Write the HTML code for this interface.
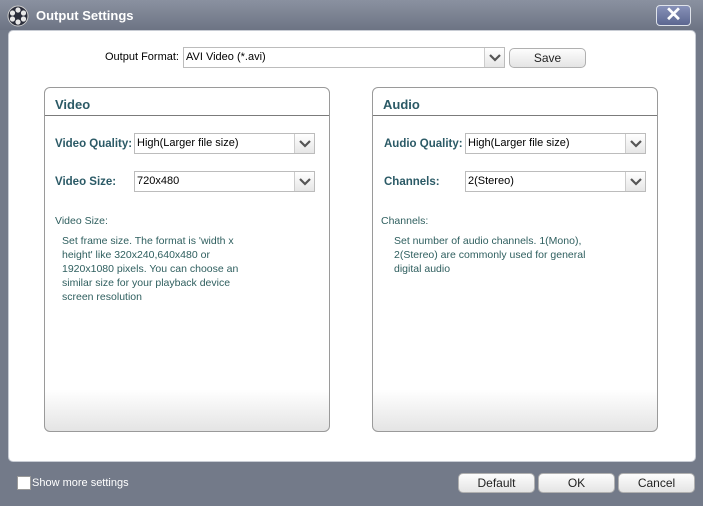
<!DOCTYPE html>
<html><head><style>
*{box-sizing:border-box;margin:0;padding:0}
body{width:703px;height:506px;background:#737a89;font-family:"Liberation Sans",sans-serif;font-size:11px;position:relative;overflow:hidden}
.abs{position:absolute}
.title{left:0;top:0;width:703px;height:30px;background:linear-gradient(#8a91a0,#6d7484)}
.ttext{left:36px;top:8px;color:#fff;font-weight:bold;font-size:13px}
.close{left:656px;top:5px;width:35px;height:21px;border:1px solid #dfe3ea;border-radius:4px;background:linear-gradient(#8791b8,#5c6790);color:#fff;font-size:20px;font-weight:bold;text-align:center;line-height:19px}
.inner{left:8px;top:30px;width:688px;height:432px;background:#fff;border:1px solid #c8ccd4;border-radius:5px}
.sel{background:#fff;border:1px solid #bcbcbc;height:21px;line-height:19px;padding-left:2px;color:#000}
.arr{position:absolute;right:0;top:0;width:20px;height:19px;border-left:1px solid #ccc;background:linear-gradient(#fff,#e6e6e6)}
.btn{border:1px solid #b0b0b0;border-radius:5px;background:linear-gradient(#fdfdfd,#e4e4e4);text-align:center;color:#222;font-size:12px;line-height:18px;height:20px}
.panel{width:286px;height:345px;border:1px solid #9a9a9a;border-radius:6px;background:linear-gradient(#fff 0,#fff 88%,#e4e4e4 100%)}
.ph{position:absolute;left:0;top:0;right:0;height:28px;border-bottom:1px solid #7b7b7b;color:#2b5a66;font-weight:bold;font-size:13px;padding:9px 0 0 10px}
.lbl{color:#2b5a66;font-weight:bold;font-size:11.5px}
.desc{color:#2f5f5f;font-size:10.5px;line-height:14px}
</style></head><body>
<div class="abs title"></div>
<svg class="abs" style="left:7px;top:5px" width="22" height="22" viewBox="0 0 22 22"><circle cx="11" cy="11" r="10" fill="#2a2d3a" stroke="#ccc"/><g fill="#e8e8e8"><circle cx="11" cy="5" r="2.6"/><circle cx="11" cy="17" r="2.6"/><circle cx="5.5" cy="8" r="2.6"/><circle cx="16.5" cy="8" r="2.6"/><circle cx="5.5" cy="14" r="2.6"/><circle cx="16.5" cy="14" r="2.6"/></g></svg>
<div class="abs ttext">Output Settings</div>
<div class="abs close">✕</div>
<div class="abs inner"></div>
<div class="abs" style="left:105px;top:51px;font-size:11px">Output Format:</div>
<div class="abs sel" style="left:183px;top:47px;width:322px">AVI Video (*.avi)<div class="arr"><svg width="20" height="19"><path d="M5 7l5 5 5-5" stroke="#555" stroke-width="2.2" fill="none"/></svg></div></div>
<div class="abs btn" style="left:509px;top:48px;width:77px">Save</div>

<div class="abs panel" style="left:44px;top:87px"><div class="ph">Video</div></div>
<div class="abs lbl" style="left:55px;top:138px">Video Quality:</div>
<div class="abs sel" style="left:134px;top:133px;width:181px">High(Larger file size)<div class="arr"><svg width="20" height="19"><path d="M5 7l5 5 5-5" stroke="#555" stroke-width="2.2" fill="none"/></svg></div></div>
<div class="abs lbl" style="left:55px;top:176px">Video Size:</div>
<div class="abs sel" style="left:134px;top:171px;width:181px">720x480<div class="arr"><svg width="20" height="19"><path d="M5 7l5 5 5-5" stroke="#555" stroke-width="2.2" fill="none"/></svg></div></div>
<div class="abs desc" style="left:55px;top:214px">Video Size:</div>
<div class="abs desc" style="left:62px;top:234px;width:200px">Set frame size. The format is 'width x height' like 320x240,640x480 or 1920x1080 pixels. You can choose an similar size for your playback device screen resolution</div>

<div class="abs panel" style="left:372px;top:87px"><div class="ph">Audio</div></div>
<div class="abs lbl" style="left:384px;top:138px">Audio Quality:</div>
<div class="abs sel" style="left:465px;top:133px;width:181px">High(Larger file size)<div class="arr"><svg width="20" height="19"><path d="M5 7l5 5 5-5" stroke="#555" stroke-width="2.2" fill="none"/></svg></div></div>
<div class="abs lbl" style="left:384px;top:176px">Channels:</div>
<div class="abs sel" style="left:465px;top:171px;width:181px">2(Stereo)<div class="arr"><svg width="20" height="19"><path d="M5 7l5 5 5-5" stroke="#555" stroke-width="2.2" fill="none"/></svg></div></div>
<div class="abs desc" style="left:381px;top:214px">Channels:</div>
<div class="abs desc" style="left:394px;top:234px;width:215px">Set number of audio channels. 1(Mono), 2(Stereo) are commonly used for general digital audio</div>

<div class="abs" style="left:17px;top:476px;width:14px;height:14px;background:#fff;border:1px solid #999"></div>
<div class="abs" style="left:32px;top:477px;color:#fff;font-size:11px">Show more settings</div>
<div class="abs btn" style="left:458px;top:473px;width:77px">Default</div>
<div class="abs btn" style="left:538px;top:473px;width:77px">OK</div>
<div class="abs btn" style="left:618px;top:473px;width:77px">Cancel</div>
</body></html>
